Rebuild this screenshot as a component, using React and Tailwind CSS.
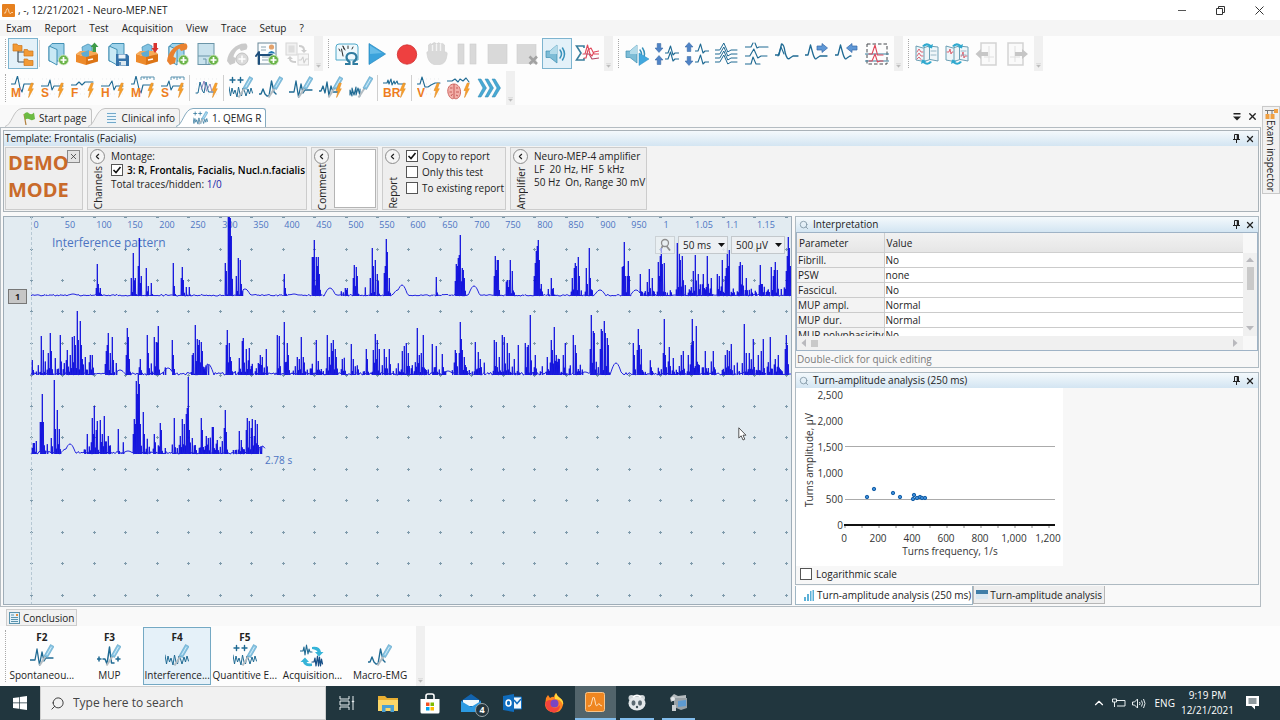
import React from 'react';
import { Search, X, ChevronLeft, ChevronUp } from 'lucide-react';

const BLUE = '#1f6a93';
const ORANGE = '#ee7d1f';

/* ---------- Small drawing parts shared by the toolbar icons ---------- */

const Icon = ({ children, size = 24 }) => (
    <svg width={size} height={size} viewBox="0 0 24 24" fill="none" aria-hidden="true">
        {children}
    </svg>
);

const Line = ({ d, c = BLUE, w = 1.1 }) => (
    <path d={d} stroke={c} strokeWidth={w} strokeLinejoin="round" strokeLinecap="round" />
);

const Bolt = () => (
    <path d="M20.3 7 L17 14.6 L19 14.4 L17.6 21.5 L22.3 12.7 L20.4 12.9 L22.3 7.3 Z" fill="#f9a12b" stroke="#e08a22" strokeWidth="0.6" />
);

const Letter = ({ children }) => (
    <text x="0" y="21" fontSize="12" fontWeight="700" fill={ORANGE} fontFamily="Liberation Sans, sans-serif">{children}</text>
);

const Needle = () => (
    <>
        <path d="M17 10 L9.5 21.5" stroke="#b3bcc2" strokeWidth="2" />
        <path d="M20.5 0.5 L24 2.5 L17.5 13.5 L14 12 Z" fill="#86c3e3" stroke="#4d98be" strokeWidth="0.5" />
        <path d="M21.5 2.8 L16.8 11" stroke="#d4edf8" strokeWidth="1" />
    </>
);

const Plus = () => (
    <>
        <circle cx="18.5" cy="18" r="5" fill="#6cb54a" stroke="#d6ebcc" strokeWidth="0.8" />
        <path d="M18.5 15 V21 M15.5 18 H21.5" stroke="#fff" strokeWidth="1.7" />
    </>
);

const Book = () => (
    <>
        <path d="M4 5 L7 1.5 H19 V16 L15 19 H4 Z" fill="#9fd3ea" stroke="#3387ae" strokeWidth="0.9" />
        <path d="M4 4 L12 7.5 V23 L4 18.5 Z" fill="#c9e9f5" stroke="#3387ae" strokeWidth="0.9" />
    </>
);

const Box = () => (
    <>
        <path d="M7 5 L13 2 L17 4 V14 L8 15 Z" fill="#83c3e2" stroke="#3a88ae" strokeWidth="0.7" />
        <path d="M1 12 L5 9 H20 L23 12 L14 16 Z" fill="#f6aa58" />
        <path d="M6 11 L14 8 V15 L8 15 Z" fill="#5dacd1" />
        <path d="M1 12 L11 15 V23 L1 20 Z" fill="#ed8a2b" />
        <path d="M11 15 L23 12 V19.5 L11 23 Z" fill="#dc7415" />
        <path d="M13 18 L18 17" stroke="#fff" strokeWidth="1.4" />
    </>
);

const Phone = ({ c }) => (
    <path d="M2 19 C3 9 12 0.500 21 1.500 Q23.500 4 21.500 7.500 L16 9 L14.500 6.500 C11 8 9 12 8.500 15 L11 16 L10 21 L5 23 Z" fill={c} />
);

const Speaker = () => (
    <>
        <path d="M1 9 H5 L12 3 V21 L5 15.5 H1 Z" fill="#7dbcd6" stroke="#3d8fb2" strokeWidth="0.7" />
        <path d="M5 9 L12 3 V12 H5 Z" fill="#b3dbea" />
        <Line d="M15 8 Q18 12 15 16 M17.5 6 Q21.5 12 17.5 18" c="#3791ba" w={1.5} />
    </>
);

const Arrow = ({ x, y, r = 0 }) => (
    <g transform={`translate(${x} ${y}) rotate(${r})`}>
        <path d="M-5 -2 H0 V-4.5 L5.5 0 L0 4.5 V2 H-5 Z" fill="#5e97d6" stroke="#3467a8" strokeWidth="0.7" />
    </g>
);

const MiniArrow = ({ x, y, up }) => (
    <path
        transform={`translate(${x} ${y}) scale(1 ${up ? -1 : 1})`}
        d="M-1.8 -4.5 H1.8 V0 H4 L0 4.5 L-4 0 H-1.8 Z"
        fill="#4f83c6"
        stroke="#31639f"
        strokeWidth="0.5"
    />
);

const Dotted = () => (
    <path d="M1 3 H24 M1 8 H24 M1 13 H24 M1 18 H24" stroke="#dfe3e6" strokeWidth="0.6" strokeDasharray="1 3" />
);

const NOISE = 'M0 11 L1.5 20 L3 12 L4.5 18 L6 14 L8 21 L9.5 11 L11 18 L12.5 20 L14 12 L15.5 15 L17 20 L19 13 L20.5 18 L22 12 L23.5 17';

const Stimulus = ({ d, letter }) => (
    <Icon><Dotted /><Line d={d} /><Letter>{letter}</Letter><Bolt /></Icon>
);

const Spontaneous = () => (
    <Icon><Line d="M0 16 H5 L7 5 L9.5 21 L12 8 L14 17 L16 14 H23" w={1.3} /><Needle /></Icon>
);
const Mup = () => (
    <Icon><Line d="M0 15 H4 M2 13 V17 M6 15 H8 L10 20 L12.5 3 L14.5 19 H17 M19 15 H23 M21 13 V17" w={1.5} /><Needle /></Icon>
);
const Interference = () => (
    <Icon><Line d={NOISE} w={1} /><Needle /></Icon>
);
const Quantitative = () => (
    <Icon><Line d="M1 4 H6 M3.500 1.500 V6.500 M9 4 H14 M11.500 1.500 V6.500" w={1.4} /><Line d={NOISE} w={1} /><Needle /></Icon>
);
const Macro = () => (
    <Icon><Line d="M0 18 H2 L4 13 L6 18 L8 20 H10 L12.500 5 L15 16 L17 18" w={1.4} /><Needle /></Icon>
);
const Swap = () => (
    <Icon>
        <Line d="M0 7 H3 L4 3 L5 11 L6.500 1 L8 10 L9 5 L10 8 H12" />
        <Line d="M12 18 H14 L15 14 L16 22 L17.500 12 L18.500 22 L19.500 13 L20.500 22 L21.500 15 L22.500 20" c="#174f87" w={1.2} />
        <path d="M12 3 Q20 2 21 8 H23.500 L19 12.500 L15 8 H17.500 Q17 6 12 5 Z" fill="#35b4d8" />
        <path d="M12 22 Q4 23 3 18 H0.500 L5 13.500 L9 18 H6.500 Q7 20 12 19.500 Z" fill="#35b4d8" />
    </Icon>
);

const filing = [
    ['New exam', <Icon key="i"><Book /><Plus /></Icon>],
    ['Open exam', <Icon key="i"><Box /><path d="M17.500 10 V5 H15.500 L19.500 0.500 L23.500 5 H21 V10 Z" fill="#3f9b48" /></Icon>],
    ['Save exam', <Icon key="i"><Book /><path d="M11 12 H22 L24 14 V24 H11 Z" fill="#3673aa" /><path d="M13.500 12.500 H20.500 V16.500 H13.500 Z" fill="#e9f2f8" /><path d="M14 19 H21 V23.500 H14 Z" fill="#dce8ef" /><path d="M15 20 V23" stroke="#3673aa" strokeWidth="1.500" /></Icon>],
    ['Export exam', <Icon key="i"><Box /><path d="M18.500 1 H22 V6 H23.500 L20 11 L16.500 6 H18.500 Z" fill="#d8332e" /></Icon>],
    ['Patient call', <Icon key="i"><Book /><Phone c="#e9812f" /><Plus /></Icon>],
    ['Add template', <Icon key="i"><rect x="3" y="1.500" width="16" height="21" fill="#c9e2ed" stroke="#6b95a8" /><path d="M3 14 H19 M8 17 H11 V22 M14 17 V22" stroke="#6b95a8" /><Plus /></Icon>],
    ['Call', <Icon key="i"><Phone c="#cacaca" /><circle cx="17" cy="17" r="6" fill="#dadada" stroke="#c1c1c1" /><path d="M17 13.500 V20.500 M13.500 17 H20.500" stroke="#fff" strokeWidth="1.500" /></Icon>],
    ['Patient report', <Icon key="i"><rect x="3" y="1" width="18" height="21" fill="#fbfdfe" stroke="#6a8797" /><path d="M6 5 H11 M6 8 H11 M7 15 H18 M7 18 H18" stroke="#8ca4b0" /><circle cx="16.500" cy="5" r="2.600" fill="#e2a16b" /><path d="M12.500 11.500 Q16.500 6.500 20.500 11.500 Z" fill="#247ab3" /><Line d="M1 14 L4 10 V22 M4 13 H17" c="#1d4e7b" w={2} /><Plus /></Icon>],
    ['Exchange', <Icon key="i"><rect x="1" y="1" width="11" height="12" fill="#f1f1f1" stroke="#d6d6d6" /><rect x="3.500" y="3.500" width="6" height="7" fill="#dedede" /><rect x="13" y="12" width="10.500" height="11" fill="#f6f6f6" stroke="#d8d8d8" /><Line d="M14 18 H16 L18 15 L19 21 L21 17 H23" c="#cfcfcf" /><path d="M14 3 Q20 3 20 8 H22 L19 11 L16 8 H18 Q18 5 14 5 Z M11 21 Q4 21 4 17 H2 L5 14 L8 17 H6 Q6 19 11 19 Z" fill="#cdcdcd" /></Icon>],
];

const grey = { fill: '#d9d9d9', stroke: '#cecece', strokeWidth: 0.6 };

const recording = [
    ['Impedance', <Icon key="i"><path d="M1 18 V5 Q1 2 4 2 H20 Q23 2 23 5 V18 Z" fill="#eff9fd" stroke="#4fa8c9" /><Line d="M4 7 L5 9 M8 4.500 L9 7 M13 4 V6.500 M18 5 L17 7 M10 8 L8 4" c="#333" w={1} /><Line d="M8 14 L6.500 7" c="#333" /><path d="M10 22 H14.500 V20 Q11.500 18 11.500 15 Q12 11 16.500 11 Q21 11 21.500 15 Q21.500 18 18.500 20 V22 H23" stroke="#2f7ca0" strokeWidth="2.200" /></Icon>],
    ['Play', <Icon key="i"><path d="M4 1.500 L20.500 12 L4 22.500 Z" fill="#3ba3dc" stroke="#2487bd" strokeWidth="0.700" /><path d="M5 3.500 L17 11 L5 12 Z" fill="#66bce8" /></Icon>],
    ['Record', <Icon key="i"><circle cx="12" cy="12.500" r="9.700" fill="#ee4040" stroke="#cf2c2c" strokeWidth="0.800" /></Icon>],
    ['Hold', <Icon key="i"><path d="M2 12 Q1 9.500 3.500 9.500 V3 Q5.500 0 7.500 3 V1.500 Q9.500 -0.500 11.500 2 Q14 -0.500 15.500 2 Q18 0.500 19.500 3 V10 Q23 9.500 22 13 Q21 22 15 22.500 H9 Q3 21 2 12 Z" {...grey} /><path d="M7.500 3 V9 M11.500 2 V9 M15.500 2 V9" stroke="#f4f4f4" strokeWidth="1.400" /></Icon>],
    ['Pause', <Icon key="i"><rect x="3" y="2" width="6" height="20" {...grey} /><rect x="15" y="2" width="6" height="20" {...grey} /></Icon>],
    ['Stop', <Icon key="i"><rect x="3" y="2.500" width="19" height="19" {...grey} /></Icon>],
    ['Cancel', <Icon key="i"><rect x="2" y="2.500" width="19" height="19" {...grey} /><path d="M14.500 14.500 L22 22 M22 14.500 L14.500 22" stroke="#a2a2a2" strokeWidth="2.600" /></Icon>],
    ['Sound', <Icon key="i"><Speaker /></Icon>],
    ['Averaging', <Icon key="i"><path d="M9 6 V4 H1.500 L6 11 L1.500 18 H9 V16" stroke="#3a7f9d" strokeWidth="1.600" /><Line d="M8 12 H10 L12.500 3 L15 12 L17 14 L19 10 L24 9" c="#e0475a" /><Line d="M9 16 H11 L13 8 L16 6 L19 12 L24 12" c="#e0475a" /><Line d="M11 12 L14 12 L17 17 L24 16" c="#b24763" /></Icon>],
];

const Trace = ({ x, y, s = 1, w = 1.1 }) => (
    <path d={`M${x} ${y} h${3 * s} l${2.5 * s} -7 l${2.5 * s} 9 l${2 * s} -2 h${4 * s}`} stroke={BLUE} strokeWidth={w} strokeLinejoin="round" />
);

const traces = [
    ['Play sound', <Icon key="i"><Speaker /><path d="M14 11 L24 17 L14 23.500 Z" fill="#42a8de" stroke="#2a8cc2" strokeWidth="0.500" /></Icon>],
    ['Bring together', <Icon key="i"><MiniArrow x={4} y={6} /><MiniArrow x={4} y={18} up /><Trace x={10} y={11} /><Trace x={10} y={17} /></Icon>],
    ['Move apart', <Icon key="i"><MiniArrow x={4} y={5} up /><MiniArrow x={4} y={19} /><Trace x={10} y={9} /><Trace x={10} y={20} /></Icon>],
    ['Stack traces', <Icon key="i"><Trace x={0} y={8} s={1.6} w={1} /><Trace x={0} y={12} s={1.6} w={1} /><Trace x={0} y={16} s={1.6} w={1} /><Trace x={0} y={20} s={1.6} w={1} /></Icon>],
    ['Spread traces', <Icon key="i"><Line d="M0 5 H6 L8 1 M10 1 L12 6 L14 5 H23" /><Trace x={0} y={14} s={1.6} /><Line d="M0 22 H6 L8 15 L11 22 H15" /></Icon>],
    ['Superimpose', <Icon key="i"><Line d="M0 13 H4 L6.500 2 Q9 2 10 10 Q12 19 15 16 L18 14 H23" w={1.3} /><Line d="M3 14 L6 5 L9 12" /></Icon>],
    ['Shift right', <Icon key="i"><Line d="M0 13 H3 L5.500 3 L8 12 Q10 19 12 16 L15 14 H22" w={1.3} /><Arrow x={17} y={6} /></Icon>],
    ['Shift left', <Icon key="i"><Line d="M0 13 H3 L5.500 3 L8 12 Q10 19 12 16 L15 14 H16" w={1.3} /><Arrow x={17} y={6} r={180} /></Icon>],
    ['Select area', <Icon key="i"><rect x="2" y="2" width="20" height="20" stroke="#44484c" strokeDasharray="3.500 2" /><Line d="M0 12 H24 M0 19 H24" c="#3a7f9d" /><Line d="M4 12 H7 L10 3 L12.500 13 H18 M4 19 H7 L10 12 L12.500 20 L15 19 H18" c="#e0475a" /></Icon>],
];

const Sheets = ({ d }) => (
    <Icon>
        <path d="M1 4 L8 6 L14 4 L23 5 V19 L15 17.500 L9 19.500 L1 18 Z" fill="#eff6f9" stroke="#6a9eb4" />
        <path d="M9 6 V19 M14.500 4.500 V17.500" stroke="#6a9eb4" />
        <Line d={d} c="#dc5766" w={0.9} />
        <Line d="M16 9 H21 M16 13 H21" c="#8fb0bf" w={0.9} />
        <path d="M7 4 Q11 -1 16 3 L18 2 L17 6.500 L12.500 5 L14 4 Q11 2.500 9 5 Z M17 20 Q13 25 8 21 L6 22 L7 17.500 L11.500 19 L10 20 Q13 22 15 19 Z" fill="#2fa9cf" />
    </Icon>
);

const pages = [
    ['Compare traces', <Sheets key="i" d="M2 10 L4 7 L6 10 H8 M2 14 L4 11 L6 14 H8 M2 17 L4 15 L6 17.500" />],
    ['Compare pages', <Sheets key="i" d="M2 10 H4 L5 7 L6 12 L7 10 H8 M16 14 H17 L18 10 L19 16 L20 14 H22" />],
    ['Previous page', <Icon key="i"><rect x="6" y="1" width="15" height="22" fill="#fafafa" stroke="#d3d3d3" strokeWidth="1.500" /><path d="M14 4 V20 M9 15 H19" stroke="#e0e0e0" /><path d="M13 10 H6 V7 L0.500 12 L6 17 V14 H13 Z" fill="#c6c6c6" /></Icon>],
    ['Next page', <Icon key="i"><rect x="3" y="1" width="15" height="22" fill="#fafafa" stroke="#d3d3d3" strokeWidth="1.500" /><path d="M10 4 V20 M5 15 H15" stroke="#e0e0e0" /><path d="M10 10 H17 V7 L23 12 L17 17 V14 H10 Z" fill="#c6c6c6" /></Icon>],
];

const stimulation = [
    ['M-wave', <Stimulus key="i" letter="M" d="M0 8 H4 L6.500 0 L9 12 L11 16 L13 8 H22" />],
    ['Sensory', <Stimulus key="i" letter="S" d="M0 10 H7 L9 4 L11 14 L13 10 H22" />],
    ['F-wave', <Stimulus key="i" letter="F" d="M0 9 H5 L8 6 L11 9 L14 6 H22" />],
    ['H-reflex', <Stimulus key="i" letter="H" d="M0 10 H8 L11 5 L13 14 L15 10 H22" />],
    ['M inching', <Icon key="i"><Line d="M0 8 H3 L5 0 L8 13 L10 17 L12 9 H22" /><path d="M10 4 V1 H23 V4 M13 1 V3 M16 1 V4 M19 1 V3" stroke="#5a93b0" /><Letter>M</Letter><Bolt /></Icon>],
    ['S inching', <Icon key="i"><Line d="M0 10 H6 L8 5 L10 14 L12 10 H22" /><path d="M10 4 V1 H23 V4 M13 1 V3 M16 1 V4 M19 1 V3" stroke="#5a93b0" /><Letter>S</Letter><Bolt /></Icon>],
];

const muscle = [
    ['Quantitative EMG', <Quantitative key="i" />],
    ['MUP', <Macro key="i" />],
    ['Spontaneous', <Spontaneous key="i" />],
    ['Reflex EMG', <Icon key="i"><Line d="M0 15 H2 L4 10 L6 17 L8 6 L10 20 L12 10 L14 16 H19" w={1.3} /><Needle /><Bolt /></Icon>],
    ['Single fiber', <Icon key="i"><Line d="M1 19 V14 L3 20 V12 L5 19 L7 11 V19 L9 12 L11 20 V13" /><Needle /></Icon>],
];

const evoked = [
    ['Visual', <Stimulus key="i" letter="V" d="M0 8 H3 L5 1 L8 11 H11 L14 9 L18 7 H23" />],
    ['Cortex', <Icon key="i"><Line d="M0 5 H5 L8 3 L11 6 L13 3 L16 5 L19 2 L22 6" /><path d="M7 8 C2 8 0 13 1 17 C2 22 6 24 7 22 C9 24 13 22 13.500 17 C14 12 11 8 7 8 Z" fill="#f3b0a9" stroke="#cf6b66" /><path d="M7 8 V22 M3 12 H5.500 M2.500 16 H5 M4 20 L5.500 18 M9 12 H11 M9 16 H12 M9 19 L11 20" stroke="#c65a58" /><Bolt /></Icon>],
    ['More', <Icon key="i"><path d="M1 3 H4 L9.500 12 L4 21 H1 L6 12 Z M8 3 H11 L16.500 12 L11 21 H8 L13 12 Z M15 3 H18 L23.500 12 L18 21 H15 L20 12 Z" fill="#48a9d4" stroke="#2c86b0" strokeWidth="0.500" /></Icon>],
];

/* ---------- Toolbar ---------- */

const Grip = () => <div className="my-[3px] ml-[5px] mr-[3px] w-px border-l border-dotted border-[#a9a9a9]" />;

const Overflow = () => (
    <div className="ml-[2px] flex w-[9px] items-end justify-center bg-[#f0f0f0] pb-[3px]">
        <svg width="5" height="5" viewBox="0 0 5 5" aria-hidden="true">
            <path d="M0 0.500 H5 M0.500 2 H4.500 L2.500 4.500 Z" fill="#b5b5b5" stroke="#ccc" strokeWidth="0.500" />
        </svg>
    </div>
);

const Divider = () => <div className="mx-[1px] my-[4px] w-[2px] border-l border-[#cfcfcf]" />;

const ToolButton = ({ label, active, children }) => (
    <button
        type="button"
        aria-label={label}
        className={`flex h-[31px] w-[30px] shrink-0 items-center justify-center self-center ${active ? 'border border-[#7db4cf] bg-[#e3f1f9]' : ''}`}
    >
        {children}
    </button>
);

const ToolGroup = ({ items, active }) => items.map(([label, icon]) => (
    <ToolButton key={label} label={label} active={active === label}>{icon}</ToolButton>
));

const Toolbars = () => (
    <div className="bg-[#fdfdfd]">
        <div className="flex h-[35px] items-stretch">
            <div className="my-[3px] ml-[5px] mr-[2px] w-px border-l border-dotted border-[#a9a9a9]" />
            <ToolButton label="Exam inspector" active>
                <Icon>
                    <path d="M7 7 V20 M7 10 H14 M7 20 H14" stroke="#41505a" strokeWidth="1.200" />
                    <path d="M2 2 H6 L7 3.500 H11 V9 H2 Z M13 7.500 H16.500 L17.500 9 H22 V14 H13 Z M13 17 H16.500 L17.500 18.500 H22 V23.500 H13 Z" fill="#f29a35" stroke="#cd751b" strokeWidth="0.700" />
                </Icon>
            </ToolButton>
            <Divider />
            <ToolGroup items={filing} />
            <Overflow />
            <Grip />
            <ToolGroup items={recording} active="Sound" />
            <Overflow />
            <Grip />
            <ToolGroup items={traces} />
            <Overflow />
            <Grip />
            <ToolGroup items={pages} />
            <Overflow />
        </div>
        <div className="flex h-[34px] items-stretch">
            <div className="my-[3px] ml-[5px] mr-[2px] w-px border-l border-dotted border-[#a9a9a9]" />
            <ToolGroup items={stimulation} />
            <Divider />
            <ToolButton label="Decrement">
                <Icon><Dotted /><Line d="M1 17 H3 L5 6 L7.500 15 L9 17 L11 6 L13.500 16 H20" w={1} /><Line d="M6.500 13 L9 5 L11.500 15 M13 12 L15 8 L17 16" c="#9084bd" w={1} /><Bolt /></Icon>
            </ToolButton>
            <Divider />
            <ToolGroup items={muscle} />
            <Divider />
            <ToolButton label="Blink reflex">
                <Icon>
                    <Line d="M0 7 H4 L5 4 L6 8 L8 3 L9 9 L11 5 L12 8 L14 5 L15 8 H22" />
                    <Letter>BR</Letter>
                    <Bolt />
                </Icon>
            </ToolButton>
            <Divider />
            <ToolGroup items={evoked} />
            <Overflow />
        </div>
    </div>
);

/* ---------- Panels ---------- */

const Pin = () => (
    <svg width="7" height="9" viewBox="0 0 7 9" fill="none" aria-hidden="true">
        <path d="M1.500 0.500 H5.500 V5.500 H1.500 Z M0 5.500 H7 M3.500 5.500 V9" stroke="#222" />
        <path d="M4.500 0.500 V5.500" stroke="#222" strokeWidth="1.500" />
    </svg>
);

const PanelTitle = ({ children, search }) => (
    <div className="flex h-[15px] items-center bg-linear-to-b from-[#f4f9fc] to-[#d3e5f2] pl-px pr-[3px] leading-[13px]">
        {search && <Search size={10} color="#8095a4" strokeWidth={2} className="ml-[2px] mr-[4px]" />}
        <h2 className="flex-1">{children}</h2>
        <button type="button" aria-label="Pin" className="mr-[5px]"><Pin /></button>
        <button type="button" aria-label="Close"><X size={10} strokeWidth={3} color="#222" /></button>
    </div>
);

const CheckBox = ({ children, checked, className = '' }) => (
    <label className={`flex items-center gap-[4px] ${className}`}>
        <span className="relative flex">
            <input type="checkbox" defaultChecked={checked} className="peer size-[12px] appearance-none border border-[#555] bg-white" />
            <svg viewBox="0 0 12 12" className="pointer-events-none absolute inset-0 hidden size-[12px] peer-checked:block" aria-hidden="true">
                <path d="M2.500 6 L5 8.500 L9.500 3" stroke="#111" strokeWidth="1.600" fill="none" />
            </svg>
        </span>
        {children}
    </label>
);

const Section = ({ title, className = '', children }) => (
    <section className={`flex h-[63px] border border-[#cccccc] bg-[#eeeeee] ${className}`}>
        <div className="flex w-[19px] flex-col items-center pt-px">
            <button type="button" aria-label={`Collapse ${title}`} className="flex size-[15px] shrink-0 items-center justify-center rounded-full border border-[#8c8c8c] bg-[#f5f5f5]">
                <ChevronLeft size={9} strokeWidth={3} />
            </button>
            <div className="flex flex-1 items-end">
                <h3 className="rotate-180 whitespace-nowrap leading-[14px] [writing-mode:vertical-rl]">{title}</h3>
            </div>
        </div>
        {children}
    </section>
);

const TemplatePanel = () => (
    <div className="border border-[#a9b2b8] bg-[#f3f3f3]">
        <PanelTitle>Template: Frontalis (Facialis)</PanelTitle>
        <div className="flex gap-[4px] px-[1px] py-[1px]">
            <div className="relative h-[63px] w-[78px] border border-[#cccccc] bg-[#eeeeee] pl-[2px] pt-px text-[20px] font-bold leading-[27px] text-[#c96a2a]">
                DEMO<br />MODE
                <button type="button" aria-label="Close demo notice" className="absolute right-[2px] top-[2px] flex size-[13px] items-center justify-center border border-[#8a8a8a] bg-[#e3e3e3]">
                    <X size={9} color="#333" strokeWidth={2} />
                </button>
            </div>
            <Section title="Channels">
                <div className="pl-[4px] pr-px pt-px leading-[14px]">
                    <p>Montage:</p>
                    <CheckBox checked><span className="font-semibold text-black">3: R, Frontalis, Facialis, Nucl.n.facialis</span></CheckBox>
                    <p>Total traces/hidden: <span className="text-[#1c1ca8]">1/0</span></p>
                </div>
            </Section>
            <Section title="Comment" className="w-[67px]">
                <textarea aria-label="Comment" className="ml-[3px] mt-[1px] h-[59px] w-[42px] resize-none border border-[#b4b4b4] bg-white" />
            </Section>
            <Section title="Report">
                <div className="flex flex-col gap-[2px] pl-[4px] pr-px pt-px leading-[14px]">
                    <CheckBox checked>Copy to report</CheckBox>
                    <CheckBox>Only this test</CheckBox>
                    <CheckBox>To existing report</CheckBox>
                </div>
            </Section>
            <Section title="Amplifier">
                <div className="whitespace-pre pl-[4px] pr-px pt-[2px] leading-[13px]">
                    <p>Neuro-MEP-4 amplifier</p>
                    <p>LF  20 Hz, HF  5 kHz</p>
                    <p>50 Hz  On, Range 30 mV</p>
                </div>
            </Section>
        </div>
    </div>
);

/* ---------- Interference traces ---------- */

// x, height pairs of the spikes in every sweep
const SWEEPS = [
    {
        base: 296, from: 31, to: 791, small: 0,
        busy: [[340, 347], [365, 378], [505, 515], [570, 592], [640, 791]],
        humps: [[73, 2], [245, 7], [330, 8], [398, 6], [402, 11], [474, 10], [600, 6], [636, 6], [294, 2]],
        spikes: [96, 8, 97, 32, 98, 12, 100, 8, 131, 18, 133, 43, 135, 18, 138, 30, 139, 58, 141, 20, 146, 28, 148, 10, 151, 13, 173, 33, 174, 10, 181, 18, 182, 29, 183, 16, 186, 9, 189, 9, 225, 33, 226, 25, 228, 80, 229, 80, 230, 78, 231, 60, 236, 20, 238, 38, 240, 36, 241, 12, 284, 22, 285, 8, 312, 39, 313, 39, 314, 56, 316, 39, 317, 30, 318, 39, 319, 22, 345, 8, 347, 8, 353, 18, 354, 31, 356, 29, 357, 20, 370, 18, 372, 48, 373, 30, 375, 36, 377, 22, 378, 15, 384, 23, 385, 30, 386, 57, 387, 44, 389, 18, 436, 19, 455, 15, 456, 32, 457, 30, 458, 38, 459, 41, 460, 61, 462, 28, 463, 26, 464, 18, 494, 20, 495, 40, 496, 26, 497, 36, 498, 36, 507, 16, 509, 16, 510, 36, 512, 25, 534, 20, 535, 33, 536, 45, 537, 50, 538, 56, 539, 36, 541, 12, 548, 7, 551, 18, 553, 8, 572, 18, 574, 28, 575, 33, 576, 30, 578, 39, 579, 20, 586, 28, 587, 12, 589, 48, 590, 18, 622, 29, 623, 30, 624, 54, 625, 20, 627, 20, 628, 35, 629, 20, 640, 22, 647, 14, 649, 27, 652, 18, 658, 34, 659, 20, 660, 40, 661, 48, 662, 32, 664, 33, 677, 53, 679, 42, 680, 36, 682, 40, 693, 25, 695, 41, 698, 22, 703, 22, 707, 40, 711, 18, 717, 22, 719, 20, 722, 36, 725, 20, 726, 28, 727, 48, 728, 30, 729, 46, 739, 30, 740, 34, 742, 31, 746, 18, 760, 31, 762, 12, 771, 29, 773, 20, 774, 26, 775, 34, 777, 26, 786, 25, 787, 40, 788, 59, 789, 48, 790, 30],
    },
    {
        base: 375, from: 31, to: 791, small: 15,
        busy: [[31, 93], [105, 116], [138, 165], [190, 208], [225, 268], [275, 345], [350, 393], [395, 445], [452, 484], [493, 582], [590, 610], [632, 645], [650, 791]],
        humps: [[120, 5], [168, 7], [208, 11], [448, 4], [616, 12], [585, 3]],
        spikes: [32, 15, 41, 39, 43, 25, 48, 22, 50, 42, 51, 24, 60, 40, 67, 25, 70, 20, 72, 38, 74, 39, 75, 30, 77, 64, 78, 35, 80, 54, 81, 30, 85, 18, 90, 20, 92, 20, 106, 24, 107, 30, 108, 42, 110, 22, 112, 38, 113, 15, 126, 20, 127, 47, 128, 38, 129, 16, 140, 16, 147, 40, 148, 22, 154, 38, 156, 33, 157, 32, 158, 49, 172, 35, 173, 20, 192, 20, 193, 22, 195, 50, 197, 36, 198, 30, 199, 35, 201, 33, 202, 24, 226, 30, 227, 45, 229, 32, 230, 18, 239, 17, 242, 34, 243, 37, 246, 26, 249, 27, 260, 20, 262, 18, 266, 26, 277, 40, 279, 39, 284, 53, 287, 32, 288, 20, 297, 18, 299, 16, 301, 38, 303, 18, 316, 35, 318, 14, 327, 40, 329, 18, 331, 32, 332, 24, 333, 35, 335, 26, 336, 18, 342, 16, 351, 31, 353, 16, 366, 26, 367, 16, 373, 25, 375, 41, 377, 35, 379, 26, 384, 26, 386, 18, 389, 26, 402, 24, 404, 29, 406, 32, 408, 22, 417, 47, 419, 20, 421, 22, 423, 40, 432, 31, 436, 29, 442, 21, 455, 25, 456, 22, 459, 22, 460, 53, 461, 36, 462, 25, 464, 18, 475, 33, 478, 23, 480, 16, 494, 35, 496, 33, 499, 18, 502, 40, 504, 38, 507, 32, 509, 22, 514, 16, 518, 30, 525, 32, 527, 28, 528, 30, 530, 60, 535, 20, 547, 18, 551, 35, 552, 25, 554, 48, 556, 20, 559, 16, 563, 20, 565, 32, 573, 40, 575, 30, 576, 22, 590, 26, 591, 60, 593, 44, 594, 42, 600, 26, 601, 46, 602, 44, 604, 54, 605, 42, 607, 37, 608, 30, 633, 32, 634, 20, 637, 25, 638, 46, 639, 30, 641, 26, 663, 22, 664, 56, 665, 20, 669, 28, 681, 20, 683, 24, 688, 20, 691, 30, 692, 56, 693, 34, 696, 49, 705, 24, 713, 24, 725, 20, 727, 25, 729, 24, 731, 31, 744, 51, 746, 22, 749, 22, 753, 36, 758, 20, 761, 24, 763, 36, 770, 38, 775, 16, 778, 20, 785, 26, 786, 40, 787, 30],
    },
    {
        base: 454, from: 31, to: 265, small: 14,
        busy: [[31, 60], [84, 110], [118, 124], [134, 166], [172, 262]],
        humps: [[66, 5], [70, 10], [128, 3], [262, 8]],
        spikes: [34, 11, 40, 32, 41, 32, 42, 60, 43, 32, 51, 16, 54, 74, 55, 25, 57, 44, 59, 25, 87, 20, 92, 36, 93, 20, 94, 48, 96, 24, 97, 33, 100, 34, 102, 20, 104, 38, 108, 18, 118, 25, 133, 20, 134, 35, 135, 30, 136, 73, 137, 60, 138, 80, 139, 70, 140, 30, 143, 42, 144, 20, 154, 20, 160, 31, 161, 24, 174, 36, 180, 18, 182, 35, 184, 30, 186, 40, 187, 46, 188, 77, 189, 24, 192, 16, 201, 36, 202, 24, 206, 18, 208, 16, 212, 27, 213, 27, 217, 14, 224, 26, 225, 44, 226, 22, 239, 23, 241, 14, 246, 24, 247, 36, 249, 33, 251, 26, 252, 35, 254, 18, 255, 34, 257, 30],
    },
];

const tracePath = ({ base, from, to, small, busy, humps, spikes }) => {
    let seed = base * 7;
    const random = () => {
        seed = (seed * 16807) % 2147483647;
        return seed / 2147483647;
    };
    const heights = new Map();
    for (let i = 0; i < spikes.length; i += 2) heights.set(spikes[i], spikes[i + 1]);

    let d = '';
    for (let x = from; x <= to; x += 1) {
        let rest = random() * (small ? 2.5 : 1.5);
        humps.forEach(([hx, h]) => {
            const dist = Math.abs(x - hx);
            if (dist < 6) rest = Math.max(rest, h * Math.cos((dist / 6) * (Math.PI / 2)));
        });
        const isBusy = busy.some(([a, b]) => x >= a && x <= b);
        // every tall spike has a lower flank right after it
        const flank = (heights.get(x - 1) || 0) * random() * 0.4;
        const noise = isBusy && random() > 0.5 ? 3 + random() * random() * (small || 12) : 0;
        const peak = heights.get(x) || Math.max(flank, noise);
        const y = base - rest;
        d += `${d ? 'L' : 'M'}${x} ${y.toFixed(1)}`;
        if (peak) d += `L${x + 0.3} ${(base - peak).toFixed(1)}L${x + 0.7} ${base}`;
    }
    return d;
};

const TIME_LABELS = [
    ['0', 36], ['50', 70], ['100', 104], ['150', 135], ['200', 167], ['250', 198], ['300', 230], ['350', 261],
    ['400', 292], ['450', 324], ['500', 356], ['550', 387], ['600', 418], ['650', 450], ['700', 482], ['750', 513],
    ['800', 545], ['850', 576], ['900', 608], ['950', 639], ['1', 666], ['1.05', 704], ['1.1', 732], ['1.15', 766],
];
const GRID_Y = [249, 280, 311, 343, 375, 406, 437, 469, 500, 532, 563, 595];
const GRID_X = Array.from({ length: 25 }, (_, i) => Math.round(31 + i * 31.45));

const Signal = () => (
    <svg viewBox="4 217 787 388" className="block h-[388px] w-[787px]" fill="none">
        <path d={GRID_Y.map((y) => GRID_X.map((x) => `M${x - 1} ${y + 0.5}H${x + 2}M${x + 0.5} ${y - 1}V${y + 2}`).join('')).join('')} stroke="#7f9bac" />
        <path d={GRID_X.map((x) => `M${x - 1} 217.500H${x + 2}`).join('')} stroke="#7b97a8" />
        <path d="M31.500 217 V605" stroke="#b7c8d4" strokeDasharray="3 2" />
        <g fill="#4c74c2" fontSize="9">
            {TIME_LABELS.map(([label, x]) => (
                <text key={label} x={x} y="228" textAnchor="middle">{label}</text>
            ))}
            <text x="52" y="247" fontSize="12">Interference pattern</text>
            <text x="265" y="464" fontSize="10">2.78 s</text>
        </g>
        {SWEEPS.map((sweep) => (
            <path key={sweep.base} d={tracePath(sweep)} stroke="#0d0ddc" strokeWidth="0.900" strokeLinejoin="bevel" />
        ))}
    </svg>
);

const ScaleSelect = ({ label, options, className }) => (
    <span className={`relative ${className}`}>
        <select aria-label={label} className="block h-[18px] w-full appearance-none border border-[#c3c8cc] bg-[#eef1f3]/85 pl-[4px]">
            {options.map((option) => <option key={option}>{option}</option>)}
        </select>
        <svg width="7" height="4" viewBox="0 0 7 4" className="pointer-events-none absolute right-[3px] top-[7px]" aria-hidden="true">
            <path d="M0 0 H7 L3.500 4 Z" fill="#111" />
        </svg>
    </span>
);

const SignalPanel = () => (
    <main className="relative min-w-0 flex-1 overflow-hidden border border-[#9fadb8] bg-[#e2ebf1]">
        <Signal />
        <button type="button" className="absolute left-[4px] top-[72px] h-[15px] w-[19px] border border-[#777] bg-[#c6c6c6] text-[9px] font-bold leading-[12px]">1</button>
        <div className="absolute right-[6px] top-[19px] flex gap-[3px]">
            <button type="button" aria-label="Zoom" className="flex h-[18px] w-[20px] items-center justify-center border border-[#ccd2d6] bg-[#eef1f3]/60">
                <svg width="14" height="14" viewBox="0 0 14 14" fill="none" aria-hidden="true">
                    <circle cx="7" cy="5" r="3.500" stroke="#8d8d8d" strokeWidth="1.300" />
                    <path d="M8.500 8 L12 12.500 M5 7.500 L3.500 10" stroke="#8d8d8d" strokeWidth="1.800" />
                </svg>
            </button>
            <ScaleSelect label="Sweep" options={['50 ms', '100 ms']} className="w-[50px]" />
            <ScaleSelect label="Gain" options={['500 µV', '1 mV']} className="w-[54px]" />
        </div>
        <svg width="9" height="14" viewBox="0 0 9 14" className="absolute left-[734px] top-[210px]" aria-hidden="true">
            <path d="M0.800 0.800 V11 L3.200 8.800 L5 13 L6.800 12.200 L5 8.200 H8 Z" fill="#fff" stroke="#333" strokeWidth="0.800" />
        </svg>
    </main>
);

/* ---------- Right column ---------- */

const FINDINGS = [
    ['Fibrill.', 'No'],
    ['PSW', 'none'],
    ['Fascicul.', 'No'],
    ['MUP ampl.', 'Normal'],
    ['MUP dur.', 'Normal'],
    ['MUP polyphasicity', 'No'],
];

const Tri = ({ d }) => (
    <svg width="8" height="8" viewBox="0 0 8 8" aria-hidden="true"><path d={d} fill="#b9b9bd" /></svg>
);

const InterpretationPanel = () => (
    <section className="border border-[#aebac2] bg-[#f7f7f7]">
        <PanelTitle search>Interpretation</PanelTitle>
        <div className="border border-[#9fb3c6] bg-[#f8f8f8]">
            <div className="flex h-[103px] overflow-hidden">
                <table className="h-fit flex-1 table-fixed border-separate border-spacing-0 text-left leading-[14px]">
                    <thead>
                        <tr className="h-[20px] bg-linear-to-b from-[#f2f2f2] to-[#e5e5e5]">
                            <th className="w-[85px] border-b border-r border-[#cfcfcf] p-0 pl-[2px] font-normal">Parameter</th>
                            <th className="border-b border-[#cfcfcf] p-0 pl-[2px] font-normal">Value</th>
                        </tr>
                    </thead>
                    <tbody>
                        {FINDINGS.map(([name, value]) => (
                            <tr key={name}>
                                <td className="whitespace-nowrap border-b border-r border-[#cbcbcb] bg-[#f3f3f3] p-0 pl-px">{name}</td>
                                <td className="border-b border-[#cbcbcb] bg-white p-0 pl-px">{value}</td>
                            </tr>
                        ))}
                    </tbody>
                </table>
                <div className="mt-[20px] flex w-[14px] flex-col items-center bg-[#f0f0f0] pb-[4px] pt-[3px]">
                    <Tri d="M0 6 L4 1.500 L8 6 Z" />
                    <div className="mt-[3px] h-[23px] w-[7px] bg-[#c9c9c9]" />
                    <div className="mt-auto flex"><Tri d="M0 2 L4 6.500 L8 2 Z" /></div>
                </div>
            </div>
            <div className="mr-[14px] flex h-[14px] items-center bg-[#f0f0f0] pl-[3px] pr-[4px]">
                <Tri d="M6 0 L1.500 4 L6 8 Z" />
                <div className="ml-[3px] size-[7px] bg-[#c9c9c9]" />
                <div className="ml-auto flex"><Tri d="M2 0 L6.500 4 L2 8 Z" /></div>
            </div>
        </div>
        <p className="pl-[1px] leading-[16px] text-[#7b7b7b]">Double-click for quick editing</p>
    </section>
);

const POINTS = [
    [867, 497], [874, 489], [893, 493], [900, 497], [914, 495], [913, 499], [917, 498], [920, 497], [922, 498], [925, 498],
];

const TurnChart = () => (
    <svg viewBox="796 388 267 178" className="h-[178px] w-[267px] bg-white">
        <g fill="#333" fontSize="10">
            {['2,500', '2,000', '1,500', '1,000', '500', '0'].map((label, i) => (
                <text key={label} x="843" y={399 + i * 26} textAnchor="end">{label}</text>
            ))}
            {['0', '200', '400', '600', '800', '1,000', '1,200'].map((label, i) => (
                <text key={label} x={844 + i * 34} y="542" textAnchor="middle">{label}</text>
            ))}
            <text x="950" y="555" textAnchor="middle">Turns frequency, 1/s</text>
            <text transform="translate(813 460) rotate(-90)" textAnchor="middle">Turns amplitude, µV</text>
        </g>
        <path d="M845 446.500 H1055 M845 499.500 H1055" stroke="#ababab" />
        <path d={Array.from({ length: 13 }, (_, i) => `M${845 + i * 17} 526V528`).join('')} stroke="#888" />
        <path d="M844 525 H1055" stroke="#111" strokeWidth="2" />
        {POINTS.map(([x, y]) => <circle key={x} cx={x} cy={y} r="1.700" fill="#3a8ad6" stroke="#1761a8" />)}
    </svg>
);

const TurnPanel = () => (
    <section className="flex flex-1 flex-col">
        <div className="flex flex-1 flex-col border border-[#aebac2] bg-[#f7f7f7]">
            <PanelTitle search>Turn-amplitude analysis (250 ms)</PanelTitle>
            <TurnChart />
            <CheckBox className="mb-auto ml-[4px] mt-px leading-[14px]">Logarithmic scale</CheckBox>
        </div>
        <div className="flex h-[20px] items-start pt-px">
            <button type="button" className="flex h-[19px] items-center gap-[3px] border border-t-0 border-[#9fb6c4] bg-white pl-[8px] pr-[1px]">
                <svg width="10" height="11" viewBox="0 0 10 11" aria-hidden="true"><path d="M0 7H2V11H0Z M3 4H5V11H3Z M6 1H7.500V11H6Z M8.500 0H10V11H8.500Z" fill="#5cb1d8" /></svg>
                Turn-amplitude analysis (250 ms)
            </button>
            <button type="button" className="flex h-[18px] items-center gap-[2px] border border-t-0 border-[#b7b7b7] bg-[#eeeeee] px-[2px]">
                <svg width="12" height="9" viewBox="0 0 12 9" aria-hidden="true"><path d="M0 0H12V9H0Z" fill="#d9e8f2" /><path d="M0 0H12V4H0Z" fill="#3f7ea8" /></svg>
                Turn-amplitude analysis
            </button>
        </div>
    </section>
);

/* ---------- Document tabs ---------- */

const DocTab = ({ icon, children, active, className = '' }) => (
    <button type="button" className={`relative flex h-[19px] items-center ${className}`}>
        <svg viewBox="0 0 20 19" className="h-[19px] w-[20px] shrink-0" aria-hidden="true">
            <path d="M0 19 C7 18 8 1 17 0.500 H20 V19 Z" fill={active ? '#fff' : '#f3f3f3'} />
            <path d="M0 18.500 C7 17 8 1 17 0.500 H20" fill="none" stroke={active ? '#86abc0' : '#c4c4c4'} />
        </svg>
        <span className={`flex h-full items-center gap-[4px] rounded-tr-[3px] border-r border-t pr-[4px] ${active ? 'border-[#86abc0] bg-white' : 'border-[#c4c4c4] bg-[#f3f3f3]'}`}>
            <span className="-ml-[3px] flex">{icon}</span>
            {children}
        </span>
    </button>
);

const DocTabs = () => (
    <div className="flex h-[22px] items-end pl-[5px] pr-[3px]">
        <DocTab
            icon={<svg width="13" height="13" viewBox="0 0 13 13" aria-hidden="true"><path d="M2 2 L4 13" stroke="#b2813f" strokeWidth="1.200" /><path d="M2 2 Q5 -1 7 1.500 Q10 3.500 12 0.500 L13 7 Q10 9 8 7.500 Q5 6 3 8 Z" fill="#6cbb43" /></svg>}
        >Start page</DocTab>
        <DocTab
            className="ml-[-4px]"
            icon={<svg width="13" height="12" viewBox="0 0 13 12" aria-hidden="true"><path d="M2 0H11V12H2Z" fill="#eaf4fa" /><path d="M2 1.500H11M2 4.500H11M2 7.500H11M2 10.500H11" stroke="#73a8c9" /></svg>}
        >Clinical info</DocTab>
        <DocTab active className="ml-[-4px]" icon={<Icon size={15}><Line d="M1 4 H6 M3.500 1.500 V6.500 M9 4 H14 M11.500 1.500 V6.500" /><Line d={NOISE} /><Needle /></Icon>}>1. QEMG R</DocTab>
        <div className="mb-[5px] ml-auto flex items-center gap-[6px]">
            <button type="button" aria-label="Tab list">
                <svg width="8" height="8" viewBox="0 0 8 8" aria-hidden="true"><path d="M0.500 0H7.500V1.500H0.500Z M0 3.500H8L4 7.500Z" fill="#222" /></svg>
            </button>
            <button type="button" aria-label="Close tab"><X size={11} strokeWidth={3} color="#222" /></button>
        </div>
    </div>
);

/* ---------- Bottom test bar ---------- */

const TESTS = [
    ['F2', 'Spontaneou...', <Spontaneous key="i" />],
    ['F3', 'MUP', <Mup key="i" />],
    ['F4', 'Interference...', <Interference key="i" />],
    ['F5', 'Quantitive E...', <Quantitative key="i" />],
    ['', 'Acquisition...', <Swap key="i" />],
    ['', 'Macro-EMG', <Macro key="i" />],
];

const TestBar = () => (
    <div className="flex h-[60px] bg-[#fdfdfd]">
        <div className="my-[4px] ml-[5px] mr-[2px] w-px border-l border-dotted border-[#a9a9a9]" />
        <div className="grid w-[406px] grid-cols-6">
            {TESTS.map(([key, name, icon]) => (
                <button
                    type="button"
                    key={name}
                    className={`my-[1px] flex flex-col items-center border pt-[2px] ${key === 'F4' ? 'border-[#74a9c4] bg-[#e5f1f9]' : 'border-transparent'}`}
                >
                    <b className="h-[14px] leading-[14px]">{key}</b>
                    {icon}
                    <span className="whitespace-nowrap leading-[14px]">{name}</span>
                </button>
            ))}
        </div>
        <Overflow />
    </div>
);

/* ---------- Windows taskbar ---------- */

const APPS = [
    ['Task view', '', <svg key="i" width="16" height="14" viewBox="0 0 16 14" fill="none"><path d="M1 0 V3 H10 V0 M1 14 V11 H10 V14 M1 5 H10 V9 H1 Z M14 0 V4 M14 7 V14" stroke="#e8eef0" /><circle cx="14" cy="5.500" r="1.200" fill="#e8eef0" /></svg>],
    ['File Explorer', '', <svg key="i" width="20" height="17" viewBox="0 0 20 17"><path d="M0 1 H7 L9 3 H20 V16 H0 Z" fill="#e8ae32" /><path d="M0 5 H20 V16 H0 Z" fill="#fbd768" /><path d="M4 17 V10 H16 V17 H12.500 V13 H7.500 V17 Z" fill="#4aa0d3" /></svg>],
    ['Store', '', <svg key="i" width="20" height="21" viewBox="0 0 20 21"><path d="M6 7 V3 Q6 1 8 1 H12 Q14 1 14 3 V7" fill="none" stroke="#fff" strokeWidth="1.600" /><path d="M0.500 6 H19.500 V19 Q19.500 20.500 18 20.500 H2 Q0.500 20.500 0.500 19 Z" fill="#fff" /><path d="M6 9.500H9.500V13H6Z" fill="#f25022" /><path d="M10.500 9.500H14V13H10.500Z" fill="#7fba00" /><path d="M6 14H9.500V17.500H6Z" fill="#00a4ef" /><path d="M10.500 14H14V17.500H10.500Z" fill="#ffb900" /></svg>],
    ['Mail', '', (
        <span key="i" className="relative flex">
            <svg width="20" height="19" viewBox="0 0 20 19"><path d="M0 7 L10 0 L20 7 V18 H0 Z" fill="#1263ad" /><path d="M2 6 H18 V12 H2 Z" fill="#f1f8fc" /><path d="M0 7 L10 13 L20 7 V18 H0 Z" fill="#2c9ae2" /></svg>
            <span className="absolute -bottom-[4px] -right-[8px] flex size-[14px] items-center justify-center rounded-full border border-[#9aa5aa] bg-[#26363e] text-[9px] font-bold text-white">4</span>
        </span>
    )],
    ['Outlook', '', <svg key="i" width="19" height="18" viewBox="0 0 19 18"><path d="M9 3 H18.500 V15 H9 Z" fill="#f2f8fc" stroke="#0f6cbd" /><path d="M11 6 L14 9.500 L18 5" stroke="#0f6cbd" fill="none" strokeWidth="1.500" /><path d="M0 2 L11 0 V18 L0 16 Z" fill="#0f6cbd" /><ellipse cx="5.500" cy="9" rx="2.400" ry="3" fill="none" stroke="#fff" strokeWidth="1.600" /></svg>],
    ['Firefox', '', <svg key="i" width="20" height="20" viewBox="0 0 20 20"><path d="M2 5 L4 2 L6 5 Q9 3 10 4 Q10 2 12 0 Q13 3 16 5 Q20 8 19 12 Q17 20 10 19.500 Q2 19 1 12 Z" fill="#ff8420" /><path d="M12 0 Q13 3 16 5 Q20 8 19 12 Q17 6 11 6 Q10 3 12 0 Z" fill="#ffd93d" /><path d="M1 10 Q4 5 9 8 Q12 9 10 11 Q6 11 8 14 Q12 17 16 12 Q16 18 10 19.500 Q2 19 1 10 Z" fill="#f4433d" /><circle cx="10.500" cy="10.500" r="4" fill="#7a45c4" /></svg>],
    ['Neuro-MEP.NET', 'active', <svg key="i" width="20" height="20" viewBox="0 0 20 20" fill="none"><rect x="0.500" y="0.500" width="19" height="19" rx="2" fill="#ef8620" stroke="#f9c58b" /><path d="M3 14 H5 Q6 14 7 9 Q8.500 1 10 9 Q11 16 12.500 13 Q14 10 15 13 L17 14" stroke="#fde3c2" /></svg>],
    ['Panda', 'open', <svg key="i" width="18" height="17" viewBox="0 0 18 17"><circle cx="3.500" cy="4" r="3" fill="#cfd5d8" /><circle cx="14" cy="4" r="3" fill="#cfd5d8" /><ellipse cx="9" cy="9.500" rx="8.500" ry="7" fill="#e4e8ea" /><ellipse cx="5.500" cy="9" rx="2" ry="2.700" fill="#5c6a72" /><ellipse cx="12" cy="9" rx="2" ry="2.700" fill="#5c6a72" /><circle cx="9" cy="13" r="1.200" fill="#42525a" /><path d="M5 3 Q9 0 13 3" stroke="#fff" fill="none" strokeWidth="2" /></svg>],
    ['Camera', 'open', <svg key="i" width="19" height="18" viewBox="0 0 19 18"><path d="M1 5 L5 1 L9 3 L17 2 V6 H7 L2 9 Z" fill="#b5bbbe" /><path d="M5 5 H18 V15 L12 17 L5 14 Z" fill="#98a1a6" /><path d="M9 8 L17 7 V13 L9 14 Z" fill="#5d9ad0" /><path d="M3 12 H7 V18 H3 Z" fill="#c9cfd2" /><circle cx="4" cy="6" r="2" fill="#e4e8ea" /></svg>],
];

const Taskbar = () => (
    <footer className="flex h-[34px] shrink-0 bg-[#21363e] text-white">
        <button type="button" aria-label="Start" className="flex w-[40px] items-center justify-center">
            <svg width="14" height="14" viewBox="0 0 14 14" aria-hidden="true"><path d="M0 2 L6 1.200 V6.600 H0Z M6.700 1.100 L14 0 V6.600 H6.700Z M0 7.300 H6 V12.800 L0 12Z M6.700 7.300 H14 V14 L6.700 12.900Z" fill="#fff" /></svg>
        </button>
        <label className="flex w-[286px] items-center border border-[#cfcfcf] bg-[#f1f1f1] pl-[9px] text-[#333]">
            <Search size={15} strokeWidth={1.5} className="shrink-0 -scale-x-100" />
            <input type="text" aria-label="Search" placeholder="Type here to search" className="ml-[8px] w-full bg-transparent text-[12px] outline-none placeholder:text-[#444]" />
        </label>
        <nav className="grid w-[373px] grid-cols-9">
            {APPS.map(([name, state, icon]) => (
                <button
                    type="button"
                    key={name}
                    aria-label={name}
                    className={`flex items-center justify-center ${state === 'active' ? 'border-b-2 border-[#82bdec] bg-[#52646b]' : ''} ${state === 'open' ? 'mx-[4px] border-b-2 border-[#82bdec]' : ''}`}
                >
                    {icon}
                </button>
            ))}
        </nav>
        <div className="ml-auto flex items-center pr-[21px]">
            <ChevronUp size={14} />
            <svg width="14" height="10" viewBox="0 0 14 10" fill="none" className="ml-[6px]" aria-hidden="true"><path d="M4 2.500 H13 V8 H5 M0.500 1 H4.500 V4 H0.500 Z M2.500 4 V9" stroke="#e8eef0" /></svg>
            <svg width="14" height="11" viewBox="0 0 14 11" fill="none" className="ml-[6px]" aria-hidden="true"><path d="M0.500 4 H2.500 L5.500 1 V10 L2.500 7 H0.500 Z M7.500 4 Q8.500 5.500 7.500 7 M9.500 2.500 Q11.500 5.500 9.500 8.500 M11.500 1 Q14.500 5.500 11.500 10" stroke="#e8eef0" /></svg>
            <span className="ml-[9px]">ENG</span>
            <div className="ml-[6px] text-center leading-[15px]">
                <p>9:19 PM</p>
                <p>12/21/2021</p>
            </div>
            <svg width="13" height="14" viewBox="0 0 13 14" className="ml-[12px]" aria-hidden="true"><path d="M0 0 H13 V10 H9 V13.500 L5.500 10 H0 Z" fill="#fff" /><path d="M2.500 3 H10.500 M2.500 5 H10.500 M2.500 7 H10.500" stroke="#21363e" /></svg>
        </div>
    </footer>
);

/* ---------- Window ---------- */

const TitleBar = () => (
    <header className="flex h-[20px] items-center bg-white pl-[2px] pr-[16px]">
        <svg width="13" height="13" viewBox="0 0 13 13" fill="none" aria-hidden="true">
            <rect width="13" height="13" rx="1" fill="#e6801f" />
            <path d="M2 9 H3.500 Q5 2 6.500 6 Q7.500 12 10 8 L11 9" stroke="#fbd3a4" />
        </svg>
        <h1 className="ml-[3px] flex-1">, -, 12/21/2021 - Neuro-MEP.NET</h1>
        <div className="flex items-center gap-[30px]">
            <button type="button" aria-label="Minimize" className="h-px w-[8px] bg-[#555]" />
            <button type="button" aria-label="Restore">
                <svg width="9" height="9" viewBox="0 0 9 9" fill="none" aria-hidden="true"><path d="M0.500 2.500 H6.500 V8.500 H0.500 Z M2.500 2.500 V0.500 H8.500 V6.500 H6.500" stroke="#333" /></svg>
            </button>
            <button type="button" aria-label="Close">
                <svg width="9" height="9" viewBox="0 0 9 9" fill="none" aria-hidden="true"><path d="M0.500 0.500 L8.500 8.500 M8.500 0.500 L0.500 8.500" stroke="#333" /></svg>
            </button>
        </div>
    </header>
);

const MENU = ['Exam', 'Report', 'Test', 'Acquisition', 'View', 'Trace', 'Setup', '?'];

export default function App() {
    return (
        <div className="flex h-screen flex-col overflow-hidden bg-[#f9f9f9] text-[10px] leading-[14px] text-[#222] [font-family:'Open_Sans','Noto_Sans',sans-serif]">
            <TitleBar />
            <nav className="flex h-[16px] items-center gap-[13px] bg-[#f5f5f5] pl-[6px]">
                {MENU.map((item) => <button type="button" key={item}>{item}</button>)}
            </nav>
            <Toolbars />

            <div className="flex min-h-0 flex-1">
                <div className="flex min-w-0 flex-1 flex-col">
                    <DocTabs />
                    <div className="flex min-h-0 flex-1 flex-col gap-[4px] border border-[#b4bcc2] bg-[#f9f9f9] pb-px pl-[2px] pr-px pt-[2px]">
                        <TemplatePanel />
                        <div className="flex min-h-0 flex-1 gap-[3px]">
                            <SignalPanel />
                            <aside className="flex w-[464px] flex-col gap-[4px]">
                                <InterpretationPanel />
                                <TurnPanel />
                            </aside>
                        </div>
                    </div>
                </div>
                <div className="w-[19px] pl-[1px] pt-[1px]">
                    <button type="button" className="flex h-[88px] w-full flex-col items-center gap-px border border-[#c9c9c9] bg-[#f1f1f1] pt-[2px]">
                        <svg width="13" height="10" viewBox="0 0 13 10" fill="none" className="shrink-0" aria-hidden="true"><path d="M0 1.500 H9 M2.500 1.500 V5 M7 1.500 V5" stroke="#777" /><path d="M0.500 5 H4.500 V10 H0.500 Z M5.500 5 H9.500 V10 H5.500 Z M9 0 H13 V4 H9 Z" fill="#f0a043" /></svg>
                        <span className="whitespace-nowrap leading-[14px] [writing-mode:vertical-rl]">Exam inspector</span>
                    </button>
                </div>
            </div>

            <div className="flex pl-[6px] pt-[2px]">
                <button type="button" className="flex h-[17px] items-center gap-[3px] border border-[#cdcdcd] bg-[#f1f1f1] px-[2px]">
                    <svg width="11" height="12" viewBox="0 0 11 12" fill="none" aria-hidden="true"><rect x="0.500" y="0.500" width="10" height="11" fill="#e3f1f8" stroke="#5a93ad" /><path d="M2 3 H5 M2 5.500 H9 M2 7.500 H9 M2 9.500 H9" stroke="#5a93ad" /><path d="M7 2 H9 V4 H7 Z" fill="#e58f3c" /></svg>
                    Conclusion
                </button>
            </div>
            <TestBar />
            <Taskbar />
        </div>
    );
}
